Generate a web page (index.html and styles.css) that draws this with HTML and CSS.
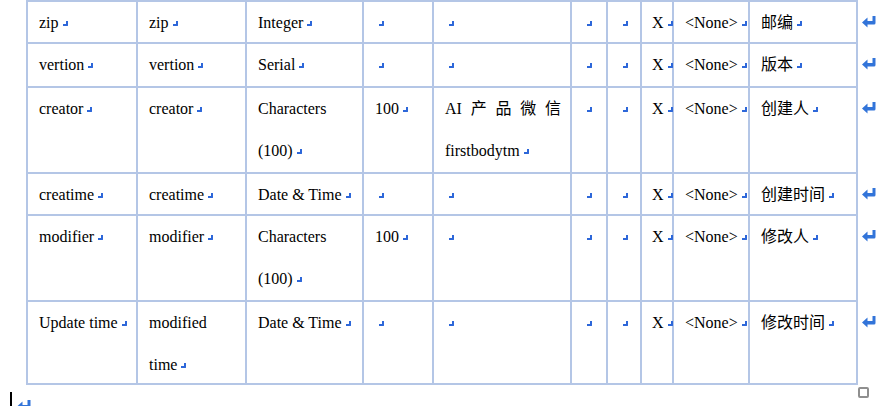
FILE: index.html
```html
<!DOCTYPE html>
<html lang="zh">
<head>
<meta charset="utf-8">
<title>Table</title>
<link rel="stylesheet" href="styles.css">
</head>
<body>
<div class="sheet">
  <div class="row r1 first">
    <div class="c">zip<i class="m"></i></div>
    <div class="c">zip<i class="m"></i></div>
    <div class="c">Integer<i class="m"></i></div>
    <div class="c"><i class="m"></i></div>
    <div class="c"><i class="m"></i></div>
    <div class="c"><i class="m"></i></div>
    <div class="c"><i class="m"></i></div>
    <div class="c x">X<i class="m"></i></div>
    <div class="c">&lt;None&gt;<i class="m"></i></div>
    <div class="c">邮编<i class="m"></i></div>
    <div class="end"><svg class="ret" viewBox="0 0 14 12" width="14" height="12"><path d="M10.5 0h3v7a1.5 1.5 0 0 1-1.5 1.5H5.5v3L0 6.5 5.5 1.5v3.5h5z"/></svg></div>
  </div>
  <div class="row r2">
    <div class="c">vertion<i class="m"></i></div>
    <div class="c">vertion<i class="m"></i></div>
    <div class="c">Serial<i class="m"></i></div>
    <div class="c"><i class="m"></i></div>
    <div class="c"><i class="m"></i></div>
    <div class="c"><i class="m"></i></div>
    <div class="c"><i class="m"></i></div>
    <div class="c x">X<i class="m"></i></div>
    <div class="c">&lt;None&gt;<i class="m"></i></div>
    <div class="c">版本<i class="m"></i></div>
    <div class="end"><svg class="ret" viewBox="0 0 14 12" width="14" height="12"><path d="M10.5 0h3v7a1.5 1.5 0 0 1-1.5 1.5H5.5v3L0 6.5 5.5 1.5v3.5h5z"/></svg></div>
  </div>
  <div class="row r3">
    <div class="c">creator<i class="m"></i></div>
    <div class="c">creator<i class="m"></i></div>
    <div class="c">Characters<br>(100)<i class="m"></i></div>
    <div class="c">100<i class="m"></i></div>
    <div class="c">
      <div class="spread"><span>AI</span><span>产</span><span>品</span><span>微</span><span>信</span></div>
      <div>firstbodytm<i class="m"></i></div>
    </div>
    <div class="c"><i class="m"></i></div>
    <div class="c"><i class="m"></i></div>
    <div class="c x">X<i class="m"></i></div>
    <div class="c">&lt;None&gt;<i class="m"></i></div>
    <div class="c">创建人<i class="m"></i></div>
    <div class="end"><svg class="ret" viewBox="0 0 14 12" width="14" height="12"><path d="M10.5 0h3v7a1.5 1.5 0 0 1-1.5 1.5H5.5v3L0 6.5 5.5 1.5v3.5h5z"/></svg></div>
  </div>
  <div class="row r4">
    <div class="c">creatime<i class="m"></i></div>
    <div class="c">creatime<i class="m"></i></div>
    <div class="c">Date &amp; Time<i class="m"></i></div>
    <div class="c"><i class="m"></i></div>
    <div class="c"><i class="m"></i></div>
    <div class="c"><i class="m"></i></div>
    <div class="c"><i class="m"></i></div>
    <div class="c x">X<i class="m"></i></div>
    <div class="c">&lt;None&gt;<i class="m"></i></div>
    <div class="c">创建时间<i class="m"></i></div>
    <div class="end"><svg class="ret" viewBox="0 0 14 12" width="14" height="12"><path d="M10.5 0h3v7a1.5 1.5 0 0 1-1.5 1.5H5.5v3L0 6.5 5.5 1.5v3.5h5z"/></svg></div>
  </div>
  <div class="row r5">
    <div class="c">modifier<i class="m"></i></div>
    <div class="c">modifier<i class="m"></i></div>
    <div class="c">Characters<br>(100)<i class="m"></i></div>
    <div class="c">100<i class="m"></i></div>
    <div class="c"><i class="m"></i></div>
    <div class="c"><i class="m"></i></div>
    <div class="c"><i class="m"></i></div>
    <div class="c x">X<i class="m"></i></div>
    <div class="c">&lt;None&gt;<i class="m"></i></div>
    <div class="c">修改人<i class="m"></i></div>
    <div class="end"><svg class="ret" viewBox="0 0 14 12" width="14" height="12"><path d="M10.5 0h3v7a1.5 1.5 0 0 1-1.5 1.5H5.5v3L0 6.5 5.5 1.5v3.5h5z"/></svg></div>
  </div>
  <div class="row r6">
    <div class="c">Update time<i class="m"></i></div>
    <div class="c">modified<br>time<i class="m"></i></div>
    <div class="c">Date &amp; Time<i class="m"></i></div>
    <div class="c"><i class="m"></i></div>
    <div class="c"><i class="m"></i></div>
    <div class="c"><i class="m"></i></div>
    <div class="c"><i class="m"></i></div>
    <div class="c x">X<i class="m"></i></div>
    <div class="c">&lt;None&gt;<i class="m"></i></div>
    <div class="c">修改时间<i class="m"></i></div>
    <div class="end"><svg class="ret" viewBox="0 0 14 12" width="14" height="12"><path d="M10.5 0h3v7a1.5 1.5 0 0 1-1.5 1.5H5.5v3L0 6.5 5.5 1.5v3.5h5z"/></svg></div>
  </div>
  <div class="handle"></div>
</div>
<div class="after">
  <span class="caret"></span>
  <svg class="ret para" viewBox="0 0 14 12" width="14" height="12"><path d="M10.5 0h3v7a1.5 1.5 0 0 1-1.5 1.5H5.5v3L0 6.5 5.5 1.5v3.5h5z"/></svg>
</div>
</body>
</html>
```

FILE: styles.css
```css
html, body {
  margin: 0;
  padding: 0;
  background: #ffffff;
}

body {
  font-family: "Liberation Serif", "Noto Sans CJK SC", serif;
  font-size: 16px;
  color: #000000;
  width: 878px;
  height: 406px;
  overflow: hidden;
}

.sheet {
  position: relative;
  margin-left: 26px;
  width: 852px;
}

.row {
  display: grid;
  grid-template-columns: 112px 109px 117px 70px 138px 36px 34px 32px 76px 108px 20px;
}

.c {
  box-sizing: border-box;
  border-right: 2px solid #b4c6e6;
  border-bottom: 2px solid #b4c6e6;
  padding: 0 2px 0 11px;
  line-height: 42px;
  white-space: nowrap;
  overflow: visible;
}

.c:first-child {
  border-left: 2px solid #b4c6e6;
}

.first .c {
  border-top: 2px solid #b4c6e6;
}

.x {
  padding-left: 10px;
}

.r1 .c, .r1 .end { height: 44px; }
.r2 .c, .r2 .end { height: 44px; }
.r3 .c, .r3 .end { height: 86px; }
.r4 .c, .r4 .end { height: 42px; }
.r5 .c, .r5 .end { height: 86px; }
.r6 .c, .r6 .end { height: 83px; }

.end {
  box-sizing: border-box;
  padding-left: 4px;
  line-height: 42px;
}

.first .end {
  padding-top: 2px;
}

.m {
  display: inline-block;
  width: 3px;
  height: 3px;
  margin-left: 4px;
  border-right: 2px solid #2d67d9;
  border-bottom: 2px solid #2d67d9;
  border-bottom-right-radius: 1px;
  vertical-align: 2px;
}

.spread {
  display: flex;
  justify-content: space-between;
  margin-right: 7px;
}

.ret {
  fill: #3274d9;
  vertical-align: 0;
}

.handle {
  position: absolute;
  left: 832px;
  top: 387px;
  width: 11px;
  height: 11px;
  box-sizing: border-box;
  border: 2px solid #8f8f8f;
  border-radius: 2px;
  background: #ffffff;
}

.after {
  display: flex;
  align-items: flex-start;
  padding-left: 10px;
  height: 40px;
}

.caret {
  display: block;
  width: 2px;
  height: 18px;
  margin-top: 7px;
  background: #000000;
}

.para {
  display: block;
  margin-top: 15px;
  margin-left: 5px;
}
```
